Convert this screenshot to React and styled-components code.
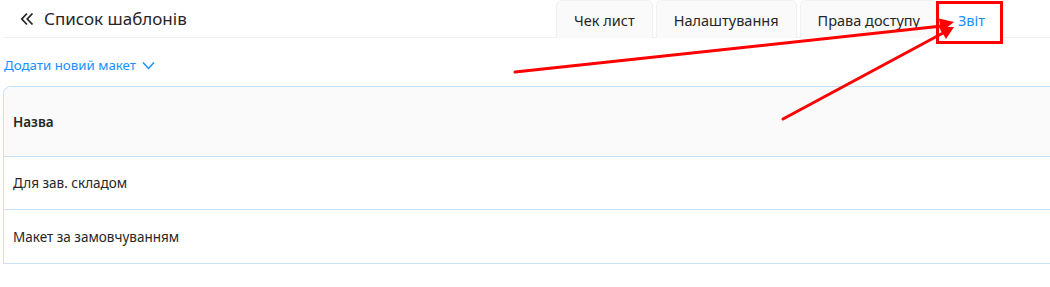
import styled, { createGlobalStyle } from "styled-components";

const GlobalStyle = createGlobalStyle`
  body {
    margin: 0;
    background: #ffffff;
    font-family: "Noto Sans", "Open Sans", sans-serif;
    color: #262626;
    overflow: hidden;
  }
`;

const Page = styled.div`
  position: relative;
  width: 1050px;
  height: 287px;
  padding-left: 3px;
  box-sizing: border-box;
`;

const TopBar = styled.div`
  display: flex;
  align-items: flex-end;
  justify-content: space-between;
  height: 37px;
  border-bottom: 1px solid #f0f0f0;
`;

const Title = styled.div`
  display: flex;
  align-items: center;
  gap: 10px;
  height: 37px;
  padding-left: 17px;
  font-size: 17px;
  color: #262626;
`;

const Tabs = styled.div`
  display: flex;
  gap: 3px;
  margin-right: 48px;
`;

const Tab = styled.div`
  height: 38px;
  padding: 0 ${(p) => (p.active ? "16px" : "17px")};
  display: flex;
  align-items: center;
  box-sizing: border-box;
  font-size: 14.5px;
  color: ${(p) => (p.active ? "#1890ff" : "#262626")};
  background: ${(p) => (p.active ? "#ffffff" : "#fafafa")};
  border: 1px solid ${(p) => (p.active ? "transparent" : "#f0f0f0")};
  border-bottom: none;
  border-radius: 6px 6px 0 0;
  margin-bottom: -1px;
`;

const AddLink = styled.div`
  display: flex;
  align-items: center;
  gap: 6px;
  height: 20px;
  margin-top: 17px;
  padding-left: 1px;
  font-size: 13.3px;
  color: #1890ff;
`;

const Table = styled.div`
  margin-top: 11px;
  width: 1070px;
  border: 1px solid #c6e2fa;
  border-right: none;
  border-radius: 8px 0 0 0;
  overflow: hidden;
`;

const HeadRow = styled.div`
  height: 69px;
  display: flex;
  align-items: center;
  padding-left: 9px;
  background: #fafafa;
  font-size: 13.5px;
  font-weight: 600;
  color: #262626;
  border-bottom: 1px solid #c6e2fa;
`;

const Row = styled.div`
  height: ${(p) => (p.last ? "53px" : "52px")};
  display: flex;
  align-items: center;
  padding-left: 9px;
  font-size: 13.5px;
  color: #262626;
  border-bottom: ${(p) => (p.last ? "none" : "1px solid #c6e2fa")};
`;

const Overlay = styled.svg`
  position: absolute;
  left: 0;
  top: 0;
  pointer-events: none;
`;

const rows = ["Для зав. складом", "Макет за замовчуванням"];
const tabs = ["Чек лист", "Налаштування", "Права доступу", "Звіт"];

export default function App() {
  return (
    <Page>
      <GlobalStyle />
      <TopBar>
        <Title>
          <svg width="14" height="14" viewBox="0 0 14 14" fill="none" stroke="#262626" strokeWidth="1.8">
            <path d="M7 1.5 1.8 7 7 12.5M12.5 1.5 7.3 7l5.2 5.5" />
          </svg>
          Список шаблонів
        </Title>
        <Tabs>
          {tabs.map((t, i) => (
            <Tab key={t} active={i === tabs.length - 1}>
              {t}
            </Tab>
          ))}
        </Tabs>
      </TopBar>
      <AddLink>
        Додати новий макет
        <svg width="13" height="9" viewBox="0 0 13 9" fill="none" stroke="#1890ff" strokeWidth="1.5">
          <path d="M1 1.5l5.5 6 5.5-6" />
        </svg>
      </AddLink>
      <Table>
        <HeadRow>Назва</HeadRow>
        {rows.map((r, i) => (
          <Row key={r} last={i === rows.length - 1}>
            {r}
          </Row>
        ))}
      </Table>
      <Overlay width="1050" height="287">
        <rect x="937.5" y="2.5" width="64" height="40" fill="none" stroke="#ff0000" strokeWidth="3" />
        <g stroke="#ff0000" strokeWidth="3" strokeLinecap="round">
          <line x1="515" y1="72" x2="942" y2="26" />
          <line x1="783" y1="119" x2="943" y2="33" />
        </g>
        <g fill="#ff0000">
          <polygon points="954,22 939,18.5 941,32" />
          <polygon points="954,27 939,27 946,39" />
        </g>
      </Overlay>
    </Page>
  );
}
